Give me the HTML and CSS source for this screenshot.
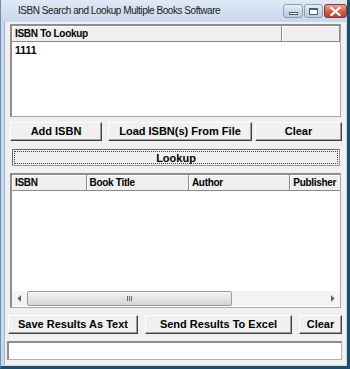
FILE: index.html
```html
<!DOCTYPE html>
<html>
<head>
<meta charset="utf-8">
<link rel="stylesheet" href="styles.css">
</head>
<body>
<div class="window">
  <div class="titlebar">
    <span class="title">ISBN Search and Lookup Multiple Books Software</span>
    <div class="tbtns">
      <div class="tb tb-min"><span class="ic-min"></span></div>
      <div class="tb tb-max"><span class="ic-max"></span></div>
      <div class="tb tb-close">
        <svg width="11" height="9" viewBox="0 0 11 9"><path d="M1.5 1 L9.5 8 M9.5 1 L1.5 8" stroke="#fff" stroke-width="2.2" stroke-linecap="square"/></svg>
      </div>
    </div>
  </div>
  <div class="frame">
    <div class="client">
      <div class="list list1">
        <div class="hdr">
          <div class="hc hc-isbn1">ISBN To Lookup</div>
          <div class="hc hc-rest"></div>
        </div>
        <div class="rows">
          <div class="row">1111</div>
        </div>
      </div>
      <div class="brow brow1">
        <div class="btn b-add">Add ISBN</div>
        <div class="btn b-load">Load ISBN(s) From File</div>
        <div class="btn b-clear1">Clear</div>
      </div>
      <div class="lookup"><div class="focus">Lookup</div></div>
      <div class="list list2">
        <div class="hdr">
          <div class="hc c-isbn">ISBN</div>
          <div class="hc c-title">Book Title</div>
          <div class="hc c-author">Author</div>
          <div class="hc c-pub">Publisher</div>
        </div>
        <div class="body2"></div>
        <div class="hscroll">
          <div class="arr arr-l"><svg width="4" height="7" viewBox="0 0 4 7"><path d="M4 0 L0.5 3.5 L4 7 Z" fill="#606060"/></svg></div>
          <div class="thumb"><span class="grip"></span><span class="grip"></span><span class="grip"></span></div>
          <div class="track"></div>
          <div class="arr arr-r"><svg width="4" height="7" viewBox="0 0 4 7"><path d="M0 0 L3.5 3.5 L0 7 Z" fill="#606060"/></svg></div>
        </div>
      </div>
      <div class="brow brow2">
        <div class="btn b-save">Save Results As Text</div>
        <div class="btn b-send">Send Results To Excel</div>
        <div class="btn b-clear2">Clear</div>
      </div>
      <div class="status"></div>
    </div>
  </div>
</div>
</body>
</html>
```
FILE: styles.css
```css
* { box-sizing: border-box; }
html, body { margin: 0; padding: 0; }
body {
  width: 350px;
  height: 369px;
  overflow: hidden;
  background: #ffffff;
  font-family: "Liberation Sans", Arial, sans-serif;
}
.window {
  width: 350px;
  height: 369px;
  display: flex;
  flex-direction: column;
  background: #c9d8ec;
  border-left: 1px solid #6f8eb3;
  border-right: 3px solid #1d4f6d;
  border-bottom: 3px solid #1d4f6d;
}
.titlebar {
  height: 22px;
  display: flex;
  align-items: center;
  background: linear-gradient(#dfe9f5, #c8d8ed);
  flex: none;
}
.title {
  margin-left: 17px;
  margin-top: -2px;
  font-family: "Liberation Sans", Arial, sans-serif;
  font-size: 10px;
  letter-spacing: -0.45px;
  color: #1a1a1a;
  flex: 1;
  white-space: nowrap;
}
.tbtns {
  display: flex;
  gap: 1px;
  align-self: flex-start;
  margin-top: 4px;
}
.tb {
  height: 14px;
  border: 1px solid #8a9cb6;
  border-radius: 3px;
  display: flex;
  align-items: center;
  justify-content: center;
  background: linear-gradient(#eaf0f8, #ccd9ea 50%, #bccde3);
}
.tb-min { width: 20px; }
.tb-max { width: 19px; }
.tb-close {
  width: 23px;
  border-color: #7a3a2e;
  background: linear-gradient(#e9a99a, #d4614a 50%, #c0432d);
}
.ic-min {
  width: 9px; height: 3px;
  border: 1px solid #4c5e78;
  background: #fff;
  margin-top: 4px;
}
.ic-max {
  width: 9px; height: 7px;
  border: 1px solid #4c5e78;
  border-top-width: 2px;
  background: #fff;
}
.frame {
  flex: 1;
  padding: 0 1px 1px 3px;
  display: flex;
}
.client {
  flex: 1;
  background: #f0f0f0;
  border-left: 1px solid #a4b4c8;
  display: flex;
  flex-direction: column;
}
.list {
  background: #ffffff;
  border-top: 2px solid #8d8d8d;
  border-left: 2px solid #8d8d8d;
  border-right: 1px solid #a8a8a8;
  border-bottom: 1px solid #a8a8a8;
  display: flex;
  flex-direction: column;
  overflow: hidden;
}
.list1 {
  margin: 2px 0 0 5px;
  width: 331px;
  height: 93px;
}
.hdr {
  display: flex;
  height: 16px;
  flex: none;
  background: #efefef;
  border-bottom: 1px solid #8a8a8a;
}
.hc {
  height: 15px;
  font-size: 10px;
  letter-spacing: -0.3px;
  font-weight: bold;
  line-height: 15px;
  padding-left: 3px;
  color: #000;
  border-right: 1px solid #8a8a8a;
  box-shadow: inset 1px 1px 0 #ffffff;
  white-space: nowrap;
  overflow: hidden;
}
.hc-isbn1 { width: 270px; }
.hc-rest { width: 58px; border-right: 1px solid #8a8a8a; }
.rows { padding: 2px 0 0 3px; }
.row {
  font-size: 10.5px;
  font-weight: bold;
  line-height: 13px;
}
.brow {
  display: flex;
  flex: none;
}
.btn {
  height: 19px;
  background: #f0f0f0;
  border-top: 1px solid #ffffff;
  border-left: 1px solid #ffffff;
  border-right: 1px solid #404040;
  border-bottom: 1px solid #404040;
  box-shadow: inset -1px -1px 0 #a0a0a0;
  font-size: 11px;
  font-weight: bold;
  text-align: center;
  line-height: 16px;
  color: #000;
  white-space: nowrap;
}
.brow1 { margin: 5px 0 0 5px; }
.b-add { width: 92px; }
.b-load { width: 144px; margin-left: 6px; }
.b-clear1 { width: 87px; margin-left: 3px; }
.lookup {
  margin: 8px 0 0 7px;
  width: 328px;
  height: 17px;
  border: 1px solid #6a6a6a;
  border-right-color: #9a9a9a;
  border-bottom-color: #9a9a9a;
  background: #f0f0f0;
  padding: 1px;
}
.focus {
  height: 100%;
  border: 1px dotted #404040;
  font-size: 11px;
  font-weight: bold;
  text-align: center;
  line-height: 12px;
}
.list2 {
  margin: 7px 0 0 5px;
  width: 331px;
  height: 135px;
}
.c-isbn { width: 75px; }
.c-title { width: 103px; }
.c-author { width: 102px; }
.c-pub { width: 50px; border-right: none; }
.body2 { flex: 1; }
.hscroll {
  height: 15px;
  flex: none;
  display: flex;
  background: #f3f3f3;
  margin-bottom: 1px;
}
.arr {
  width: 14px;
  display: flex;
  align-items: center;
  justify-content: center;
}
.thumb {
  width: 205px;
  margin-left: 1px;
  border: 1px solid #9a9a9a;
  border-radius: 2px;
  background: linear-gradient(#f4f4f4, #e3e3e3 50%, #d4d4d4);
  display: flex;
  align-items: center;
  justify-content: center;
  gap: 1px;
}
.grip { width: 1px; height: 5px; background: #6a6a6a; }
.track { flex: 1; }
.brow2 { margin: 7px 0 0 3px; }
.b-save { width: 130px; }
.b-send { width: 147px; margin-left: 7px; }
.b-clear2 { width: 43px; margin-left: 7px; }
.status {
  margin: 7px 0 0 2px;
  width: 335px;
  height: 19px;
  background: #ffffff;
  border-top: 2px solid #8d8d8d;
  border-left: 2px solid #8d8d8d;
  border-right: 1px solid #b0b0b0;
  border-bottom: 1px solid #b0b0b0;
}
```
